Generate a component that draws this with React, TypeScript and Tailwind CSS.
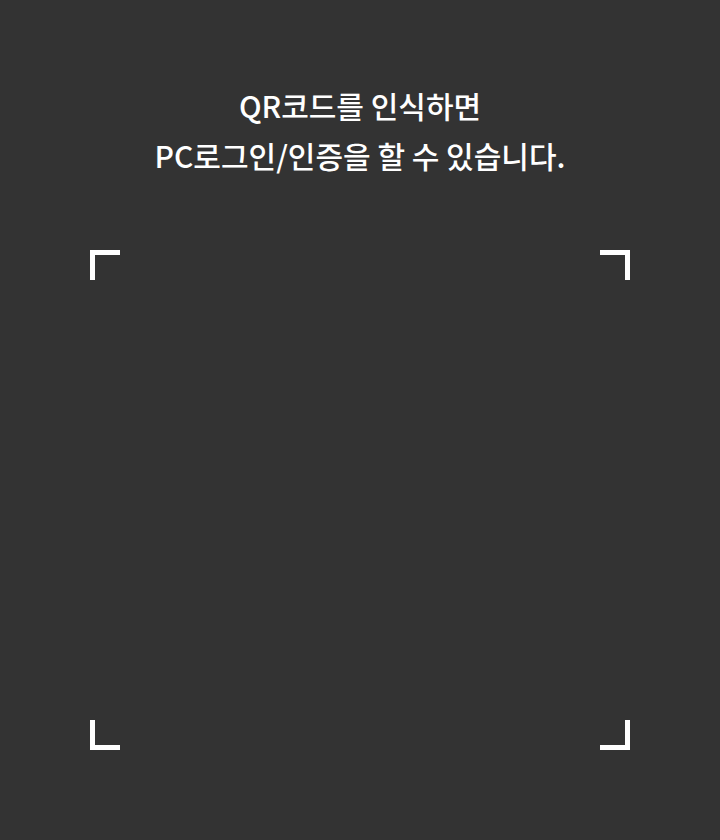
export default function App() {
  return (
    <div
      className="min-h-[840px] w-full bg-[#333333] text-white"
      style={{ fontFamily: '"Noto Sans CJK KR", "Noto Sans", sans-serif' }}
    >
      {/* Guide text */}
      <div className="pt-[80px] text-center text-[30px] font-medium leading-[50px]">
        <p>QR코드를 인식하면</p>
        <p>PC로그인/인증을 할 수 있습니다.</p>
      </div>

      {/* Scan frame */}
      <div className="mx-auto mt-[70px] flex h-[500px] w-[540px] flex-col justify-between">
        <div className="flex justify-between">
          <div className="h-[30px] w-[30px] border-l-[5px] border-t-[5px] border-white" />
          <div className="h-[30px] w-[30px] border-r-[5px] border-t-[5px] border-white" />
        </div>
        <div className="flex justify-between">
          <div className="h-[30px] w-[30px] border-b-[5px] border-l-[5px] border-white" />
          <div className="h-[30px] w-[30px] border-b-[5px] border-r-[5px] border-white" />
        </div>
      </div>
    </div>
  );
}
